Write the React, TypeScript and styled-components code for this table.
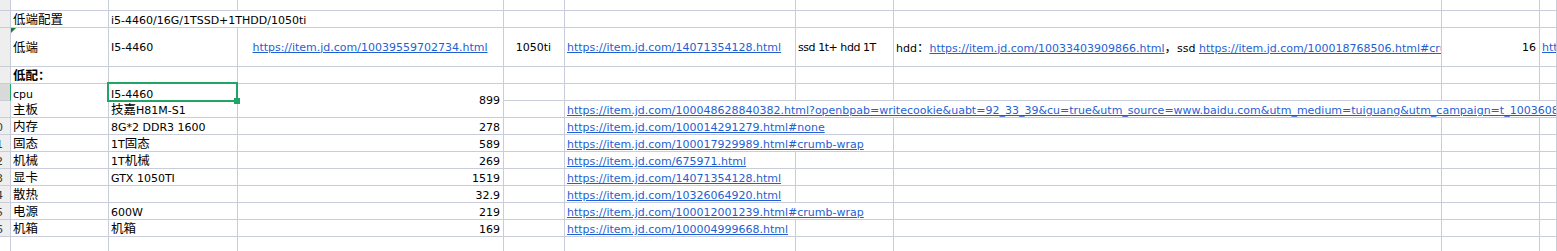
import React from "react";
import styled, { createGlobalStyle } from "styled-components";

const GRID = "#c9cdd9";
const GREEN = "#21a566";
const LINK = "#1f5fd1";

const GlobalStyle = createGlobalStyle`
  html, body { margin: 0; padding: 0; background: #ffffff; overflow: hidden; }
  body {
    font-family: "DejaVu Sans", "Noto Sans CJK SC", sans-serif;
    font-size: 11px;
    color: #000000;
  }
`;

const Sheet = styled.div`
  display: grid;
  grid-template-columns: 11px 98px 129px 266px 61px 231px 98px 548px 98px 1fr;
  grid-template-rows: 11px 17px 39px 17px repeat(10, 17px);
  width: 1557px;
  height: 251px;
  overflow: hidden;
  background: #ffffff;
`;

type Align = "left" | "center" | "right";

const CellBox = styled.div<{
  $span?: number;
  $rows?: number;
  $align?: Align;
  $mid?: boolean;
  $open?: boolean;
  $noBottom?: boolean;
}>`
  grid-column: span ${(p) => p.$span ?? 1};
  grid-row: span ${(p) => p.$rows ?? 1};
  position: relative;
  min-width: 0;
  display: flex;
  align-items: ${(p) => (p.$mid ? "center" : "flex-end")};
  justify-content: ${(p) =>
    p.$align === "right" ? "flex-end" : p.$align === "center" ? "center" : "flex-start"};
  padding: 0 3px 0 2px;
  border-right: 1px solid ${GRID};
  border-bottom: ${(p) => (p.$noBottom ? "none" : `1px solid ${GRID}`)};
  overflow: ${(p) => (p.$open ? "visible" : "hidden")};
  white-space: nowrap;
  line-height: 13px;
`;

const Inner = styled.span<{ $tight?: boolean }>`
  flex: none;
  white-space: pre;
  letter-spacing: ${(p) => (p.$tight ? "-0.45px" : "normal")};
`;

const Cjk = styled.span<{ $bold?: boolean }>`
  font-family: "Noto Sans CJK SC", sans-serif;
  font-size: 12.5px;
  font-weight: ${(p) => (p.$bold ? 700 : 400)};
`;

const Link = styled.span`
  color: ${LINK};
  text-decoration: underline;
  text-underline-offset: 1px;
`;

const RowHead = styled.div<{ $tone?: "normal" | "active" | "blank" }>`
  display: flex;
  align-items: flex-end;
  overflow: hidden;
  background: ${(p) =>
    p.$tone === "active" ? "#d9d9d9" : p.$tone === "blank" ? "#ffffff" : "#eeeeee"};
  border-right: 1px solid ${(p) => (p.$tone === "active" ? GREEN : GRID)};
  border-bottom: 1px solid ${GRID};
  color: #3a3a3a;
  line-height: 13px;
`;

const RowNum = styled.span`
  flex: none;
  width: 28px;
  margin-left: -18px;
  text-align: center;
`;

const Flag = styled.span`
  position: absolute;
  top: 0;
  left: 0;
  width: 0;
  height: 0;
  border-top: 5px solid #1f7a3a;
  border-right: 5px solid transparent;
`;

const Selection = styled.span`
  position: absolute;
  top: -2px;
  left: -2px;
  right: -1px;
  bottom: -1px;
  border: 2px solid ${GREEN};
  pointer-events: none;
  z-index: 2;
`;

const Handle = styled.span`
  position: absolute;
  right: -3px;
  bottom: -3px;
  width: 6px;
  height: 6px;
  background: ${GREEN};
  z-index: 3;
`;

const CJK_RE = /([\u3000-\u303f\u3400-\u9fff\uff00-\uffef]+)/;

function Mixed({ text, bold }: { text: string; bold?: boolean }) {
  const parts = text.split(CJK_RE);
  return (
    <>
      {parts.map((p, i) =>
        i % 2 === 1 ? (
          <Cjk key={i} $bold={bold}>
            {p}
          </Cjk>
        ) : (
          <React.Fragment key={i}>{p}</React.Fragment>
        )
      )}
    </>
  );
}

type CellProps = {
  span?: number;
  rows?: number;
  align?: Align;
  mid?: boolean;
  open?: boolean;
  noBottom?: boolean;
  tight?: boolean;
  children?: React.ReactNode;
};

function Cell({ span, rows, align, mid, open, noBottom, tight, children }: CellProps) {
  return (
    <CellBox
      $span={span}
      $rows={rows}
      $align={align}
      $mid={mid}
      $open={open}
      $noBottom={noBottom}
    >
      {children !== undefined && <Inner $tight={tight}>{children}</Inner>}
    </CellBox>
  );
}

function Blank({ n, mid }: { n: number; mid?: boolean }) {
  return (
    <>
      {Array.from({ length: n }, (_, i) => (
        <CellBox key={i} $mid={mid} />
      ))}
    </>
  );
}

function Head({ num, tone }: { num?: string; tone?: "normal" | "active" | "blank" }) {
  return (
    <RowHead $tone={tone}>
      <RowNum>{num ?? ""}</RowNum>
    </RowHead>
  );
}

const parts: { label: string; spec: string; price: string; link: string; wide?: boolean }[] = [
  { label: "内存", spec: "8G*2 DDR3 1600", price: "278", link: "https://item.jd.com/100014291279.html#none", wide: true },
  { label: "固态", spec: "1T固态", price: "589", link: "https://item.jd.com/100017929989.html#crumb-wrap", wide: true },
  { label: "机械", spec: "1T机械", price: "269", link: "https://item.jd.com/675971.html" },
  { label: "显卡", spec: "GTX 1050TI", price: "1519", link: "https://item.jd.com/14071354128.html" },
  { label: "散热", spec: "", price: "32.9", link: "https://item.jd.com/10326064920.html" },
  { label: "电源", spec: "600W", price: "219", link: "https://item.jd.com/100012001239.html#crumb-wrap", wide: true },
  { label: "机箱", spec: "机箱", price: "169", link: "https://item.jd.com/100004999668.html" },
];

export default function App() {
  return (
    <>
      <GlobalStyle />
      <Sheet>
        {/* row 4 (partial) */}
        <Head num="4" />
        <Blank n={9} />

        {/* row 5 */}
        <Head num="5" />
        <Cell>
          <Mixed text="低端配置" />
        </Cell>
        <Cell span={2}>i5-4460/16G/1TSSD+1THDD/1050ti</Cell>
        <Blank n={6} />

        {/* row 6 */}
        <Head num="6" />
        <CellBox $mid>
          <Flag />
          <Inner>
            <Mixed text="低端" />
          </Inner>
        </CellBox>
        <Cell mid>I5-4460</Cell>
        <Cell mid align="center">
          <Link>https://item.jd.com/10039559702734.html</Link>
        </Cell>
        <Cell mid align="center">
          1050ti
        </Cell>
        <Cell mid>
          <Link>https://item.jd.com/14071354128.html</Link>
        </Cell>
        <Cell mid tight>
          ssd 1t+ hdd 1T
        </Cell>
        <Cell mid>
          hdd<Mixed text="：" />
          <Link>https://item.jd.com/10033403909866.html</Link>
          <Mixed text="，" />
          ssd <Link>https://item.jd.com/100018768506.html#crumb-wrap</Link>
        </Cell>
        <Cell mid align="right">
          16
        </Cell>
        <Cell mid>
          <Link>https://item.jd.com/100014291279.html</Link>
        </Cell>

        {/* row 7 */}
        <Head num="7" />
        <Cell>
          <Mixed text="低配：" bold />
        </Cell>
        <Blank n={8} />

        {/* row 8: cpu */}
        <Head num="8" tone="active" />
        <Cell noBottom>cpu</Cell>
        <CellBox $noBottom $open>
          <Inner>I5-4460</Inner>
          <Selection />
          <Handle />
        </CellBox>
        <Cell rows={2} mid align="right">
          899
        </Cell>
        <Blank n={6} />

        {/* row 9: 主板 */}
        <Head num="9" />
        <Cell>
          <Mixed text="主板" />
        </Cell>
        <Cell>
          <Mixed text="技嘉H81M-S1" />
        </Cell>
        <Blank n={1} />
        <Cell span={5}>
          <Link>
            https://item.jd.com/100048628840382.html?openbpab=writecookie&amp;uabt=92_33_39&amp;cu=true&amp;utm_source=www.baidu.com&amp;utm_medium=tuiguang&amp;utm_campaign=t_1003608409_&amp;utm_term=0f3d30c8dba7459bb52f2eb5eba8ac7d_0_1b1b1a1d2d6f4d0e8e8b1c4d5b6b4a1c
          </Link>
        </Cell>

        {parts.map((r, i) => (
          <React.Fragment key={r.label}>
            <Head num={String(10 + i)} />
            <Cell>
              <Mixed text={r.label} />
            </Cell>
            <Cell>{r.spec ? <Mixed text={r.spec} /> : undefined}</Cell>
            <Cell align="right">{r.price}</Cell>
            <Blank n={1} />
            <Cell span={r.wide ? 2 : 1}>
              <Link>{r.link}</Link>
            </Cell>
            <Blank n={r.wide ? 3 : 4} />
          </React.Fragment>
        ))}

        {/* row 17 */}
        <Head tone="blank" />
        <Blank n={9} />
      </Sheet>
    </>
  );
}
